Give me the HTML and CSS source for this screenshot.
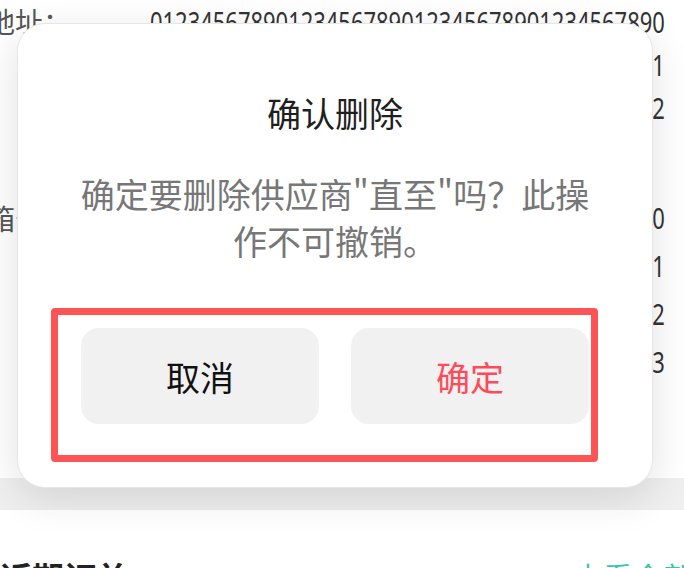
FILE: index.html
```html
<!DOCTYPE html>
<html lang="zh-CN">
<head>
  <meta charset="UTF-8" />
  <title>供应商详情</title>
  <link rel="stylesheet" href="styles.css">
</head>
<body>

<div class="page">
  <section class="card info-card">
    <div class="field field-address">
      <span class="field-label">地址：</span>
      <span class="field-value">012345678901234567890123456789012345678901234567890123456789012345678901234567890123456789012345678901234567890123456789012</span>
    </div>
    <div class="field field-box">
      <span class="field-label">箱号：</span>
      <span class="field-value">01234567890123456789012345678901234567890123456789012345678901234567890123456789012345678901234567890123456789012345678901234567890123456789012345678901234567890123</span>
    </div>
  </section>

  <section class="card list-card">
    <div class="card-head">
      <h3>近期订单</h3>
      <a href="#">查看全部</a>
    </div>
  </section>
</div>

<!-- Delete confirm dialog -->
<div class="dialog">
  <h2 class="dialog-title">确认删除</h2>
  <p class="dialog-message">确定要删除供应商"直至"吗？此操作不可撤销。</p>
  <div class="dialog-actions">
    <button class="btn btn-cancel">取消</button>
    <button class="btn btn-confirm">确定</button>
  </div>
</div>

</body>
</html>
```

FILE: styles.css
```css
body {
  margin: 0;
  font-family: "Noto Sans CJK SC", "Noto Sans", sans-serif;
  background-color: #efefef;
  overflow: hidden;
  height: 568px;
}

.page {
  margin-left: -13px;
  width: 720px;
}

.card {
  background-color: #fff;
}

.info-card {
  height: 478px;
  overflow: hidden;
}

.field {
  display: grid;
  grid-template-columns: 163px 1fr;
  color: #333;
}

.field-label {
  font-size: 28px;
  line-height: 43px;
  color: #555;
}

/* narrow digits like the device font */
.field-value {
  width: 688px;
  font-family: "Noto Sans", sans-serif;
  font-size: 29px;
  word-break: break-all;
  transform: scaleX(0.757);
  transform-origin: left top;
}

.field-address .field-value {
  line-height: 43px;
}

.field-box {
  margin-top: 65px;
}

.field-box .field-value,
.field-box .field-label {
  line-height: 48px;
}

.list-card {
  margin-top: 32px;
  height: 100px;
}

.card-head {
  display: flex;
  justify-content: space-between;
  align-items: center;
  padding: 43px 14px 0 13px;
}

.card-head h3 {
  margin: 0;
  font-size: 32px;
  font-weight: bold;
  color: #222;
}

.card-head a {
  font-size: 30px;
  color: #35c7a4;
  text-decoration: none;
}

.dialog {
  position: absolute;
  left: 17px;
  top: 23px;
  width: 634px;
  padding: 65px 0 25px;
  background-color: #fff;
  border: 1px solid #e6e6e6;
  border-radius: 28px;
  box-shadow: 0 10px 40px rgba(0, 0, 0, 0.12);
}

.dialog-title {
  margin: 0;
  font-size: 34px;
  line-height: 48px;
  font-weight: normal;
  text-align: center;
  color: #1f1f1f;
}

.dialog-message {
  margin: 33px 0 0;
  padding: 0 50px;
  font-size: 34px;
  line-height: 47px;
  text-align: center;
  color: #777;
}

.dialog-actions {
  display: flex;
  gap: 32px;
  margin: 44px 54px 0 33px;
  padding: 13px 2px 31px 23px;
  border: 7px solid #fd5555;
  border-radius: 4px;
}

.btn {
  flex: 1;
  height: 96px;
  border: none;
  border-radius: 18px;
  background-color: #f1f1f1;
  font-family: "Noto Sans CJK SC", "Noto Sans", sans-serif;
  font-size: 34px;
  cursor: pointer;
}

.btn-cancel {
  color: #111;
}

.btn-confirm {
  color: #ff4a5a;
}
```
